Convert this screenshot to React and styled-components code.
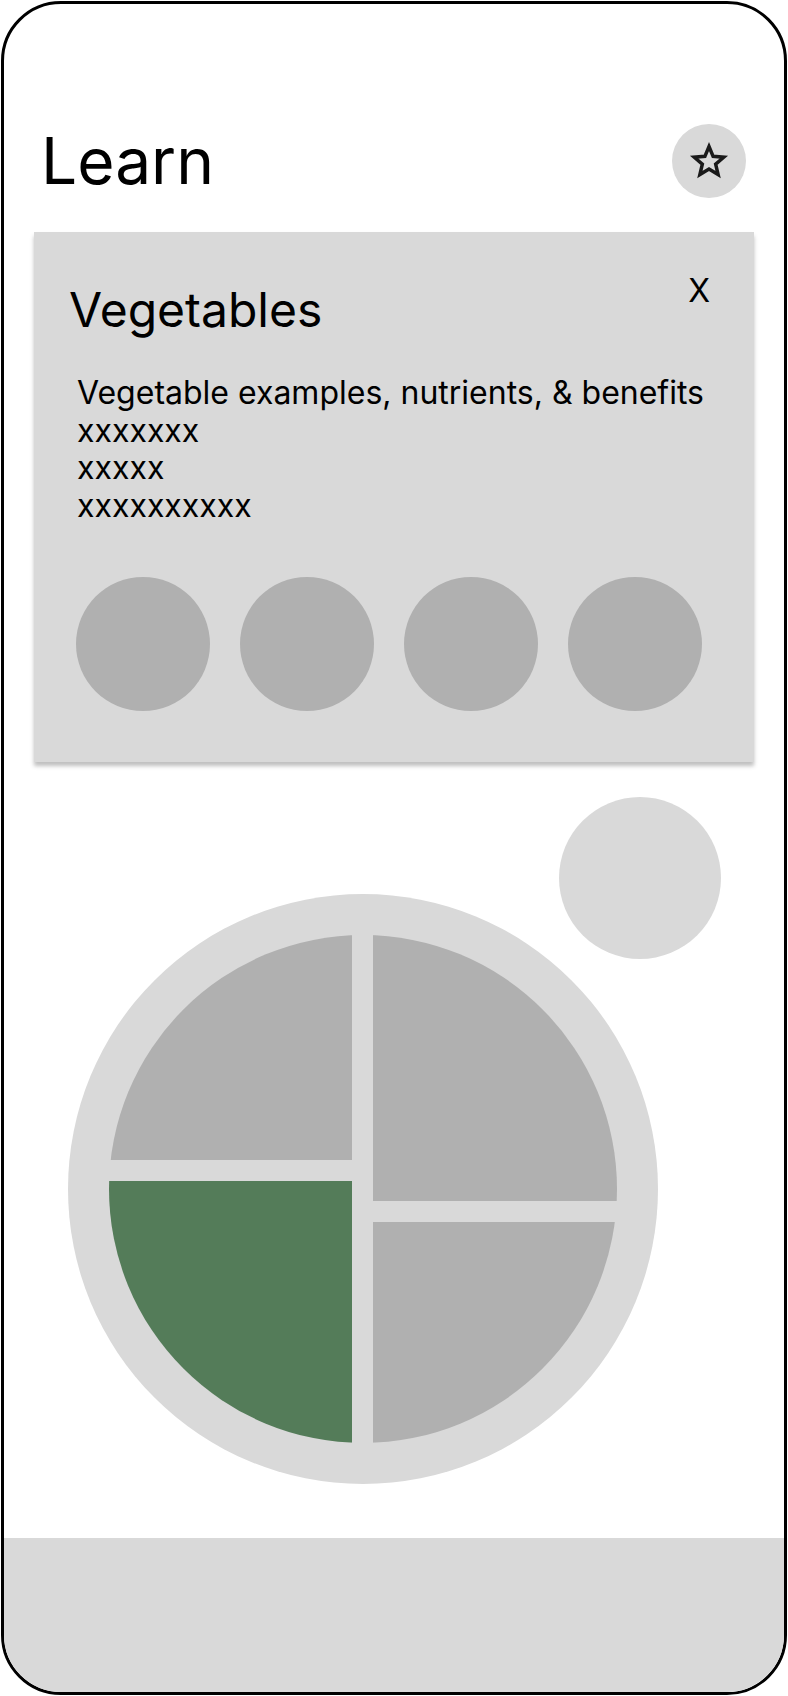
import React from "react";
import styled, { createGlobalStyle } from "styled-components";

const GlobalStyle = createGlobalStyle`
  html, body {
    margin: 0;
    padding: 0;
    background: #ffffff;
  }
  body {
    font-family: Inter, "Noto Sans", "Liberation Sans", sans-serif;
    color: #000000;
  }
`;

const LIGHT = "#d9d9d9";
const DARK = "#b0b0b0";
const GREEN = "#547c59";

const Frame = styled.div`
  margin: 1px;
  width: 786px;
  height: 1694px;
  box-sizing: border-box;
  border: 3px solid #000;
  border-radius: 60px;
  overflow: hidden;
  background: #fff;
  display: flex;
  flex-direction: column;
`;

const Header = styled.header`
  display: flex;
  align-items: center;
  justify-content: space-between;
  margin: 120px 38px 0 37px;
`;

const Title = styled.h1`
  margin: 0;
  font-size: 64px;
  line-height: 64px;
  font-weight: 400;
`;

const IconButton = styled.button`
  width: 74px;
  height: 74px;
  border: none;
  border-radius: 50%;
  background: ${LIGHT};
  padding: 0;
  display: flex;
  align-items: center;
  justify-content: center;
  cursor: pointer;
`;

const Card = styled.section`
  margin: 34px 30px 0;
  padding: 43px 44px 51px 35px;
  background: ${LIGHT};
  box-shadow: 0 4px 4px rgba(0, 0, 0, 0.25);
`;

const CardHead = styled.div`
  display: flex;
  justify-content: space-between;
  align-items: flex-start;
`;

const CardTitle = styled.h2`
  margin: 11px 0 0;
  font-size: 48px;
  line-height: 48px;
  font-weight: 400;
`;

const Close = styled.button`
  border: none;
  background: none;
  padding: 0;
  font-family: inherit;
  font-size: 32px;
  line-height: 32px;
  color: #000;
  cursor: pointer;
`;

const Body = styled.div`
  margin: 40px 0 0 8px;
  font-size: 32px;
  line-height: 37.5px;
`;

const Thumbs = styled.div`
  display: flex;
  gap: 30px;
  margin: 53px 0 0 7px;
`;

const Thumb = styled.div`
  width: 134px;
  height: 134px;
  border-radius: 50%;
  background: ${DARK};
`;

const Stage = styled.div`
  display: grid;
  margin-top: 35px;
`;

const Bubble = styled.div`
  grid-area: 1 / 1;
  justify-self: end;
  align-self: start;
  width: 162px;
  height: 162px;
  margin-right: 63px;
  border-radius: 50%;
  background: ${LIGHT};
`;

const Plate = styled.svg`
  grid-area: 1 / 1;
  justify-self: start;
  align-self: start;
  margin: 97px 0 0 64px;
  display: block;
`;

const BottomBar = styled.nav`
  margin-top: auto;
  height: 154px;
  background: ${LIGHT};
`;

const StarIcon = () => (
  <svg width="44" height="44" viewBox="0 0 44 44">
    <polygon
      points="22,7.5 26.11,17.34 36.74,18.21 28.66,25.16 31.11,35.54 22,30 12.89,35.54 15.34,25.16 7.26,18.21 17.89,17.34"
      fill="none"
      stroke="#1a1a1a"
      strokeWidth="3.5"
      strokeLinejoin="miter"
    />
  </svg>
);

const sections = [
  { key: "tl", x: 0, y: 0, w: 284, h: 266, fill: DARK },
  { key: "tr", x: 305, y: 0, w: 285, h: 307, fill: DARK },
  { key: "bl", x: 0, y: 287, w: 284, h: 303, fill: GREEN },
  { key: "br", x: 305, y: 328, w: 285, h: 262, fill: DARK },
];

const lines = ["Vegetable examples, nutrients, & benefits", "xxxxxxx", "xxxxx", "xxxxxxxxxx"];

export default function App() {
  return (
    <>
      <GlobalStyle />
      <Frame>
        <Header>
          <Title>Learn</Title>
          <IconButton aria-label="Favourites">
            <StarIcon />
          </IconButton>
        </Header>

        <Card>
          <CardHead>
            <CardTitle>Vegetables</CardTitle>
            <Close>X</Close>
          </CardHead>
          <Body>
            {lines.map((l) => (
              <div key={l}>{l}</div>
            ))}
          </Body>
          <Thumbs>
            {[0, 1, 2, 3].map((i) => (
              <Thumb key={i} />
            ))}
          </Thumbs>
        </Card>

        <Stage>
          <Bubble />
          <Plate width="590" height="590" viewBox="0 0 590 590">
            <defs>
              <clipPath id="plate-inner">
                <circle cx="295" cy="295" r="254" />
              </clipPath>
            </defs>
            <circle cx="295" cy="295" r="295" fill={LIGHT} />
            <g clipPath="url(#plate-inner)">
              {sections.map((s) => (
                <rect key={s.key} x={s.x} y={s.y} width={s.w} height={s.h} fill={s.fill} />
              ))}
            </g>
          </Plate>
        </Stage>

        <BottomBar />
      </Frame>
    </>
  );
}
